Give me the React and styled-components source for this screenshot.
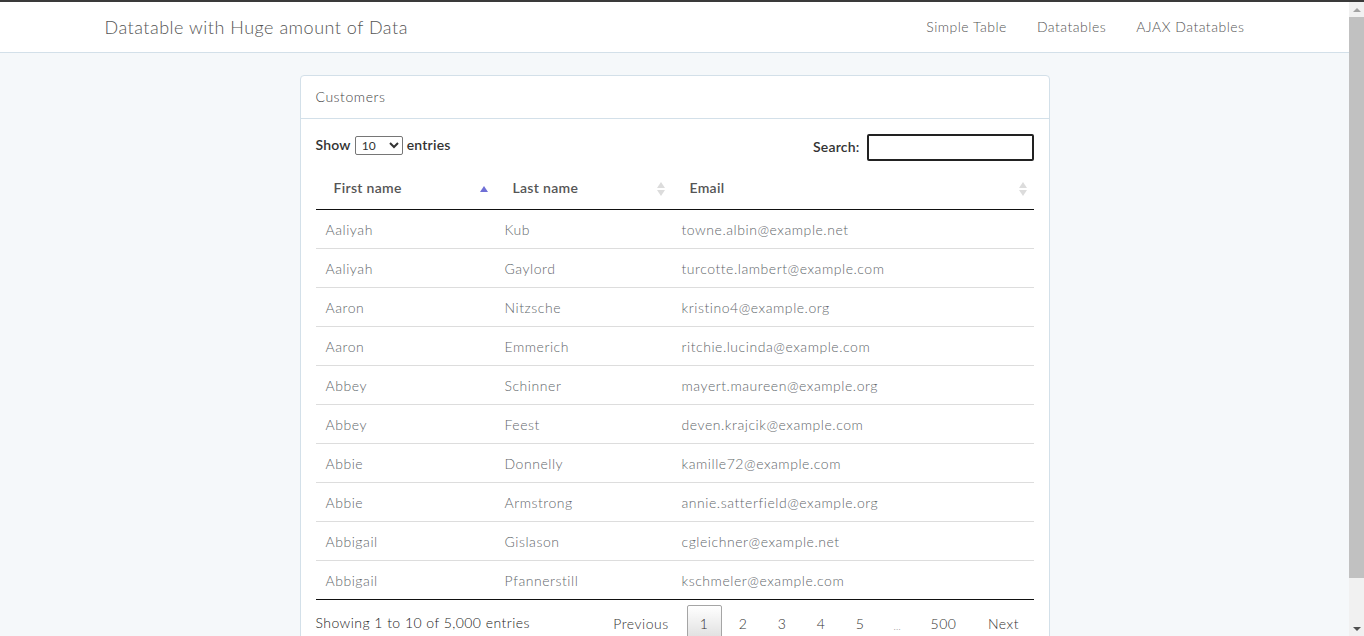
import React from "react";
import styled, { createGlobalStyle } from "styled-components";

const GlobalStyle = createGlobalStyle`
  body {
    margin: 0;
    padding-right: 15px;
    background: #f5f8fa;
    font-family: "Lato", "Liberation Sans", sans-serif;
    font-size: 14px;
    font-weight: 300;
    line-height: 1.6;
    letter-spacing: 0.55px;
    color: #5f676b;
    border-top: 2px solid #3a3a3a;
  }
`;

/* the window scrollbar seen in the screenshot */
const ScrollBar = styled.div`
  position: fixed;
  top: 2px;
  right: 0;
  bottom: 0;
  width: 15px;
  background: #f1f1f1;
  display: flex;
  flex-direction: column;
  align-items: center;
`;

const ScrollArrow = styled.div`
  height: 15px;
  display: flex;
  align-items: center;
  justify-content: center;
  &::after {
    content: "";
    border-left: 4px solid transparent;
    border-right: 4px solid transparent;
    ${(p) =>
      p.down
        ? "border-top: 4px solid #505050;"
        : "border-bottom: 4px solid #a3a3a3;"}
  }
`;

const ScrollThumb = styled.div`
  width: 15px;
  height: 561px;
  background: #c1c1c1;
`;

const ScrollSpace = styled.div`
  flex: 1;
`;

const Navbar = styled.nav`
  background: #fff;
  border-bottom: 1px solid #d3e0e9;
  height: 50px;
`;

const Container = styled.div`
  width: 1140px;
  margin: 0 auto;
  display: flex;
  align-items: center;
  justify-content: space-between;
  height: 100%;
`;

const Brand = styled.a`
  font-size: 18px;
  font-weight: 300;
  letter-spacing: 0.5px;
  color: #555;
  text-decoration: none;
`;

const NavLinks = styled.div`
  display: flex;
  gap: 30px;
`;

const NavLink = styled.a`
  color: #555;
  font-weight: 300;
  letter-spacing: 0.5px;
  text-decoration: none;
  font-size: 14px;
`;

const Main = styled.div`
  width: 750px;
  margin: 22px auto 40px;
`;

const Card = styled.div`
  background: #fff;
  border: 1px solid #d3e0e9;
  border-radius: 4px;
`;

const CardHeading = styled.div`
  padding: 10px 15px;
  border-bottom: 1px solid #d3e0e9;
  color: #444;
  height: 22px;
`;

const CardBody = styled.div`
  padding: 15px;
`;

const Controls = styled.div`
  display: flex;
  justify-content: space-between;
  align-items: flex-start;
`;

const Label = styled.label`
  display: flex;
  align-items: center;
  color: #333;
  font-weight: 600;
  font-size: 14px;
  letter-spacing: 0.2px;
`;

const LengthLabel = styled(Label)`
  gap: 4px;
`;

const Select = styled.select`
  height: 19px;
  width: 48px;
  font-family: inherit;
  font-size: 12px;
  padding: 0 2px;
  border: 1px solid #767676;
  border-radius: 2px;
  color: #333;
  background: #fff;
`;

const SearchInput = styled.input`
  margin-left: 7px;
  height: 23px;
  border: 2px solid #222;
  border-radius: 2px;
  padding: 0 4px;
  box-sizing: content-box;
  width: 155px;
`;

const Table = styled.table`
  width: 100%;
  table-layout: fixed;
  border-collapse: collapse;
  margin-top: 8px;
`;

const Th = styled.th`
  position: relative;
  box-sizing: border-box;
  text-align: left;
  padding: 8px 18px 10px;
  line-height: 22px;
  font-weight: 600;
  letter-spacing: 0.3px;
  color: #555;
  border-bottom: 1px solid #111;
  width: ${(p) => p.w}px;
`;

const SortIcon = styled.span`
  position: absolute;
  right: 7px;
  top: 50%;
  transform: translateY(-50%);
  display: flex;
  flex-direction: column;
  gap: 2px;
`;

const Arrow = styled.span`
  width: 0;
  height: 0;
  border-left: 4px solid transparent;
  border-right: 4px solid transparent;
  ${(p) =>
    p.down
      ? `border-top: 6px solid ${p.hidden ? "transparent" : "#dcdcdc"};`
      : `border-bottom: 6px solid ${p.active ? "#6f6fd6" : "#dcdcdc"};`}
`;

const Td = styled.td`
  padding: 9px 10px 7px;
  line-height: 22px;
  border-top: 1px solid #ddd;
`;

const Tr = styled.tr`
  &:first-child td {
    border-top: none;
  }
  &:last-child td {
    border-bottom: 1px solid #111;
  }
`;

const Footer = styled.div`
  display: flex;
  justify-content: space-between;
  align-items: flex-start;
  padding-top: 5px;
`;

const Info = styled.div`
  color: #222;
  font-weight: 300;
  letter-spacing: 0.45px;
  padding-top: 7px;
`;

const Pagination = styled.div`
  display: flex;
  gap: 4px;
`;

const PageButton = styled.a`
  box-sizing: border-box;
  width: ${(p) => p.w}px;
  height: 38px;
  display: flex;
  align-items: center;
  justify-content: center;
  color: #333;
  font-weight: 300;
  border: 1px solid ${(p) => (p.current ? "#a5a5a5" : "transparent")};
  border-radius: 2px;
  background: ${(p) =>
    p.current ? "linear-gradient(to bottom, #fff 0%, #dcdcdc 100%)" : "transparent"};
  font-size: ${(p) => (p.small ? "10px" : "14px")};
  ${(p) => p.small && "padding-top: 4px; color: #888;"}
`;

const rows = [
  ["Aaliyah", "Kub", "towne.albin@example.net"],
  ["Aaliyah", "Gaylord", "turcotte.lambert@example.com"],
  ["Aaron", "Nitzsche", "kristino4@example.org"],
  ["Aaron", "Emmerich", "ritchie.lucinda@example.com"],
  ["Abbey", "Schinner", "mayert.maureen@example.org"],
  ["Abbey", "Feest", "deven.krajcik@example.com"],
  ["Abbie", "Donnelly", "kamille72@example.com"],
  ["Abbie", "Armstrong", "annie.satterfield@example.org"],
  ["Abbigail", "Gislason", "cgleichner@example.net"],
  ["Abbigail", "Pfannerstill", "kschmeler@example.com"],
];

const columns = [
  { label: "First name", w: 179, active: true },
  { label: "Last name", w: 177 },
  { label: "Email", w: 362 },
];

const pages = [
  { label: "Previous", w: 83 },
  { label: "1", w: 35, current: true },
  { label: "2", w: 35 },
  { label: "3", w: 35 },
  { label: "4", w: 35 },
  { label: "5", w: 35 },
  { label: "…", w: 32, small: true },
  { label: "500", w: 52 },
  { label: "Next", w: 60 },
];

export default function App() {
  return (
    <>
      <GlobalStyle />
      <Navbar>
        <Container>
          <Brand>Datatable with Huge amount of Data</Brand>
          <NavLinks>
            <NavLink>Simple Table</NavLink>
            <NavLink>Datatables</NavLink>
            <NavLink>AJAX Datatables</NavLink>
          </NavLinks>
        </Container>
      </Navbar>
      <Main>
        <Card>
          <CardHeading>Customers</CardHeading>
          <CardBody>
            <Controls>
              <LengthLabel>
                Show
                <Select defaultValue="10">
                  <option value="10">10</option>
                  <option value="25">25</option>
                  <option value="50">50</option>
                  <option value="100">100</option>
                </Select>
                entries
              </LengthLabel>
              <Label>
                Search:
                <SearchInput type="search" />
              </Label>
            </Controls>
            <Table>
              <thead>
                <tr>
                  {columns.map((c) => (
                    <Th key={c.label} w={c.w}>
                      {c.label}
                      <SortIcon>
                        <Arrow active={c.active} />
                        <Arrow down hidden={c.active} />
                      </SortIcon>
                    </Th>
                  ))}
                </tr>
              </thead>
              <tbody>
                {rows.map((r, i) => (
                  <Tr key={i}>
                    <Td>{r[0]}</Td>
                    <Td>{r[1]}</Td>
                    <Td>{r[2]}</Td>
                  </Tr>
                ))}
              </tbody>
            </Table>
            <Footer>
              <Info>Showing 1 to 10 of 5,000 entries</Info>
              <Pagination>
                {pages.map((p) => (
                  <PageButton key={p.label} w={p.w} current={p.current} small={p.small}>
                    {p.label}
                  </PageButton>
                ))}
              </Pagination>
            </Footer>
          </CardBody>
        </Card>
      </Main>
      <ScrollBar>
        <ScrollArrow />
        <ScrollThumb />
        <ScrollSpace />
        <ScrollArrow down />
      </ScrollBar>
    </>
  );
}
